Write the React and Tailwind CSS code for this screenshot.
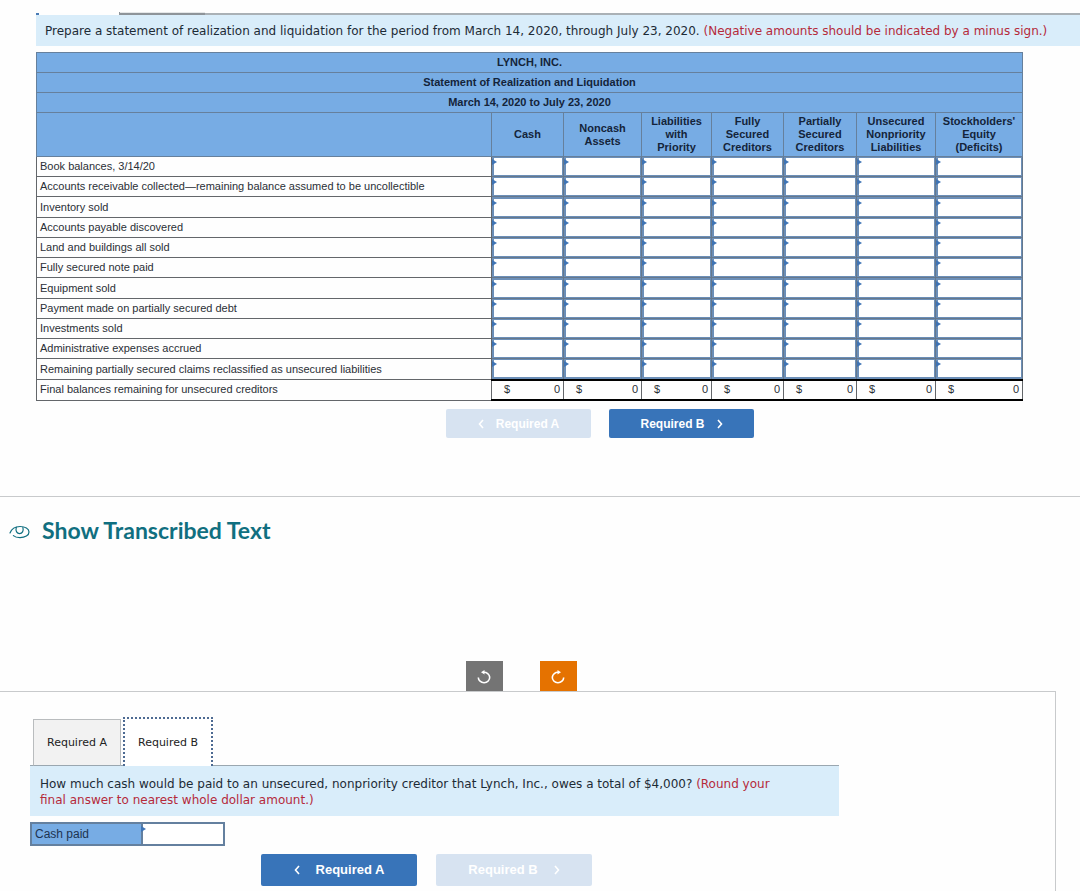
import React from "react";

const COLUMNS = [
  ["Cash"],
  ["Noncash", "Assets"],
  ["Liabilities", "with", "Priority"],
  ["Fully", "Secured", "Creditors"],
  ["Partially", "Secured", "Creditors"],
  ["Unsecured", "Nonpriority", "Liabilities"],
  ["Stockholders'", "Equity", "(Deficits)"],
];

const ROWS = [
  "Book balances, 3/14/20",
  "Accounts receivable collected—remaining balance assumed to be uncollectible",
  "Inventory sold",
  "Accounts payable discovered",
  "Land and buildings all sold",
  "Fully secured note paid",
  "Equipment sold",
  "Payment made on partially secured debt",
  "Investments sold",
  "Administrative expenses accrued",
  "Remaining partially secured claims reclassified as unsecured liabilities",
];

function Chevron({ dir }) {
  return (
    <svg viewBox="0 0 6 10" className="h-[10px] w-[6px]" fill="none" stroke="currentColor" strokeWidth="1.6" aria-hidden="true">
      <path d={dir === "left" ? "M5 1 1.5 5 5 9" : "M1 1 4.5 5 1 9"} />
    </svg>
  );
}

function Marker() {
  return (
    <svg viewBox="0 0 5 6" className="pointer-events-none absolute left-0 top-0.5 h-1.5 w-[5px]" aria-hidden="true">
      <path d="M0 0 5 3 0 6Z" fill="#3f74b5" />
    </svg>
  );
}

function Banner({ className, children }) {
  return <p className={"bg-[#d9edfa] font-['DejaVu_Sans',Verdana,sans-serif] text-[12px] text-[#1d2b36] " + className}>{children}</p>;
}

function StatementTable() {
  return (
    <table className="h-[349px] w-full table-fixed border-collapse text-[11px] leading-[13px] text-[#2a2f36]">
      <colgroup>
        <col />
        <col className="w-[72px]" />
        <col className="w-[78px]" />
        <col className="w-[70px]" />
        <col className="w-[72px]" />
        <col className="w-[73px]" />
        <col className="w-[79px]" />
        <col className="w-[87px]" />
      </colgroup>
      <thead className="bg-[#77ace4] text-[#14243a]">
        {["LYNCH, INC.", "Statement of Realization and Liquidation", "March 14, 2020 to July 23, 2020"].map((t) => (
          <tr key={t} className="h-5">
            <th colSpan={8} className="border border-[#66809c] p-0 text-center font-bold">{t}</th>
          </tr>
        ))}
        <tr className="h-11">
          <td className="border border-[#66809c]" />
          {COLUMNS.map((lines) => (
            <th key={lines.join(" ")} scope="col" className="border border-[#66809c] p-0 text-center font-bold">
              {lines.map((l) => (
                <span key={l} className="block">{l}</span>
              ))}
            </th>
          ))}
        </tr>
      </thead>
      <tbody>
        {ROWS.map((row) => (
          <tr key={row} className="h-5">
            <th scope="row" className="whitespace-nowrap border border-[#63666a] p-0 pl-[3px] text-left font-normal">{row}</th>
            {COLUMNS.map((lines) => (
              <td key={lines.join(" ")} className="border border-[#66788c] bg-[#6c8fb8] p-0">
                <div className="relative h-[19px]">
                  <input
                    type="text"
                    aria-label={row + ", " + lines.join(" ")}
                    className="block h-full w-full border border-l-2 border-[#6c8fb8] bg-white px-1 text-right outline-none"
                  />
                  <Marker />
                </div>
              </td>
            ))}
          </tr>
        ))}
        <tr className="h-5">
          <th scope="row" className="whitespace-nowrap border border-[#63666a] p-0 pl-[3px] text-left font-normal">
            Final balances remaining for unsecured creditors
          </th>
          {COLUMNS.map((lines) => (
            <td key={lines.join(" ")} className="border border-b-2 border-t-2 border-[#63666a] border-b-black border-t-black p-0">
              <div className="flex justify-between pl-3 pr-[3px]">
                <span>$</span>
                <span>0</span>
              </div>
            </td>
          ))}
        </tr>
      </tbody>
    </table>
  );
}

export default function App() {
  return (
    <main className="flex min-h-screen flex-col bg-[#fefefe] font-['Liberation_Sans',Arial,sans-serif]">
      <section className="pl-9 pt-3">
        <div className="flex h-[3px] items-end">
          <div className="h-0.5 w-[3px] bg-[#4a7bb5]" />
          <div className="ml-20 h-[3px] w-[86px] border-b-2 border-l border-[#8e9499] bg-[#e5e7e8]" />
          <div className="h-0.5 flex-1 bg-[#aab1b6]" />
        </div>
        <Banner className="h-[31px] pl-[9px] leading-[33px]">
          Prepare a statement of realization and liquidation for the period from March 14, 2020, through July 23, 2020.{" "}
          <span className="text-[#b52a3a]">(Negative amounts should be indicated by a minus sign.)</span>
        </Banner>
        <div className="mr-[57px] mt-1.5">
          <StatementTable />
        </div>
      </section>

      <nav className="mt-2 flex justify-center gap-[18px] pl-[120px] text-[12px] font-bold text-white">
        <button type="button" disabled className="flex h-[29px] w-[145px] items-center justify-center gap-3 rounded-xs bg-[#d7e3f1]">
          <Chevron dir="left" />
          Required A
        </button>
        <button type="button" className="flex h-[29px] w-[145px] items-center justify-center gap-3 rounded-xs bg-[#3874b9]">
          Required B
          <Chevron dir="right" />
        </button>
      </nav>

      <section className="mt-[58px] border-t border-[#c8cacc] pl-[9px] pt-4">
        <button type="button" className="flex items-center gap-3 font-[Lato,sans-serif] text-[23px] font-bold leading-[34px] text-[#106f80]">
          <svg viewBox="0 0 21 14" className="mt-1 h-[14px] w-[21px]" fill="none" stroke="currentColor" strokeWidth="1.2" strokeLinecap="round" aria-hidden="true">
            <path d="M1 8C2.500 4 6.500 1.500 11 1.500c5 0 9 2.100 9 5.500s-4 5.600-9 5.600c-2.800 0-5.200-.700-6.600-2" />
            <path d="M7.300 2.400C6.300 6 8 8.600 10.600 8.600S14.800 6 13.900 2.400" />
          </svg>
          Show Transcribed Text
        </button>
      </section>

      <div className="mt-[114px] flex justify-center gap-[37px] pr-[38px] text-white">
        <button type="button" aria-label="Undo" className="flex h-[30px] w-[37px] items-center justify-center bg-[#747474]">
          <svg viewBox="0 0 16 16" className="mt-0.5 size-4" fill="none" stroke="currentColor" strokeWidth="1.6" aria-hidden="true">
            <path d="M2.300 8.500A5.700 5.200 0 1 0 7.500 3.300" />
            <path d="M8.500 1 5 3.300l3.500 2.300Z" fill="currentColor" stroke="none" />
          </svg>
        </button>
        <button type="button" aria-label="Redo" className="flex h-[30px] w-[37px] items-center justify-center bg-[#e57200]">
          <svg viewBox="0 0 16 16" className="mt-0.5 size-4" fill="none" stroke="currentColor" strokeWidth="1.6" aria-hidden="true">
            <path d="M13.700 8.500A5.700 5.200 0 1 1 8.500 3.300" />
            <path d="M7.500 1 11 3.300 7.500 5.600Z" fill="currentColor" stroke="none" />
          </svg>
        </button>
      </div>

      <section className="mr-6 flex-1 border-r border-t border-[#c8cacc] pb-1.5 pl-[30px] pt-[25px]">
        <div className="max-w-[809px]">
          <div role="tablist" className="flex items-end font-['DejaVu_Sans',Verdana,sans-serif] text-[11px] text-[#222]">
            <div className="w-[3px] self-stretch border-b border-[#9aa7b0]" />
            <button type="button" role="tab" aria-selected="false" className="h-[47px] w-[88px] border border-b-[#9aa7b0] border-[#b9bcbe] bg-[#f2f2f2] pt-0.5">
              Required A
            </button>
            <div className="w-0.5 self-stretch border-b border-[#9aa7b0]" />
            <button type="button" role="tab" aria-selected="true" className="h-[49px] w-[90px] border-2 border-b-0 border-dotted border-[#4d6a92] bg-white pt-0.5">
              Required B
            </button>
            <div className="flex-1 self-stretch border-b border-[#9aa7b0]" />
          </div>
          <Banner className="pb-2 pl-2.5 pr-12 pt-2.5 leading-4">
            How much cash would be paid to an unsecured, nonpriority creditor that Lynch, Inc., owes a total of $4,000?{" "}
            <span className="text-[#b52a3a]">(Round your final answer to nearest whole dollar amount.)</span>
          </Banner>
        </div>
        <div className="mt-1.5 flex h-6 w-[195px] border-2 border-[#64809f] text-[12px] text-[#1d3350]">
          <label htmlFor="cash-paid" className="w-[109px] bg-[#77ace4] pl-[3px] leading-5">Cash paid</label>
          <div className="relative min-w-0 flex-1">
            <input id="cash-paid" type="text" className="block h-full w-full border-l-2 border-[#64809f] bg-white px-1 text-right outline-none" />
            <Marker />
          </div>
        </div>
        <nav className="ml-[231px] mt-2 flex gap-[19px] text-[13px] font-bold text-white">
          <button type="button" className="flex h-8 w-[156px] items-center justify-center gap-4 rounded-xs bg-[#3874b9]">
            <Chevron dir="left" />
            Required A
          </button>
          <button type="button" disabled className="flex h-8 w-[156px] items-center justify-center gap-4 rounded-xs bg-[#d7e3f1]">
            Required B
            <Chevron dir="right" />
          </button>
        </nav>
      </section>
    </main>
  );
}
